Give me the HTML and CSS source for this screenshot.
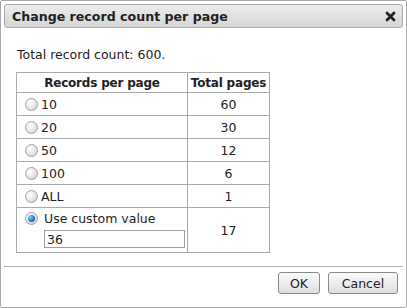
FILE: index.html
```html
<!DOCTYPE html>
<html>
<head>
<meta charset="utf-8">
<link rel="stylesheet" href="styles.css">
</head>
<body>
<div class="dialog">
  <div class="titlebar">
    <span class="title">Change record count per page</span>
    <svg class="close" width="11" height="11" viewBox="0 0 11 11"><path d="M2 2 L9 9 M9 2 L2 9" stroke="#222" stroke-width="2.8" stroke-linecap="round"/></svg>
  </div>
  <div class="content">
    <p class="total">Total record count: 600.</p>
    <table class="grid">
      <thead>
        <tr><th class="c1">Records per page</th><th class="c2">Total pages</th></tr>
      </thead>
      <tbody>
        <tr><td><span class="radio"></span>10</td><td class="num">60</td></tr>
        <tr><td><span class="radio"></span>20</td><td class="num">30</td></tr>
        <tr><td><span class="radio"></span>50</td><td class="num">12</td></tr>
        <tr><td><span class="radio"></span>100</td><td class="num">6</td></tr>
        <tr><td><span class="radio"></span>ALL</td><td class="num">1</td></tr>
        <tr class="custom"><td><div class="customline"><span class="radio checked"></span><span class="customlabel">Use custom value</span></div><input class="field" type="text" value="36"></td><td class="num">17</td></tr>
      </tbody>
    </table>
  </div>
  <div class="footer">
    <button class="btn ok">OK</button>
    <button class="btn cancel">Cancel</button>
  </div>
</div>
</body>
</html>
```
FILE: styles.css
```css
* { box-sizing: border-box; }
html, body { margin: 0; padding: 0; background: #fff; }
body {
  font-family: "DejaVu Sans", Verdana, sans-serif;
  font-size: 12.5px;
  color: #222;
}
.dialog {
  width: 407px;
  height: 308px;
  border: 1px solid #a8a8a8;
  border-radius: 2px;
  padding: 3px;
  display: flex;
  flex-direction: column;
}
.titlebar {
  height: 24px;
  flex: none;
  border: 1px solid #aaa;
  border-radius: 3px;
  background: linear-gradient(#ececec, #d6d6d6);
  display: flex;
  align-items: center;
  justify-content: space-between;
  padding: 0 6px 0 7px;
}
.title {
  font-weight: bold;
  font-size: 12.6px;
  color: #222;
}
.close { display: block; }
.content {
  padding: 0 0 0 12px;
  flex: 1;
}
.total {
  margin: 19px 0 9px 1px;
  line-height: 16px;
}
.grid {
  border-collapse: collapse;
  table-layout: fixed;
  width: 253px;
}
.grid th, .grid td {
  border: 1px solid #aaa;
  padding: 0;
}
.grid th {
  font-weight: bold;
  font-size: 12px;
  white-space: nowrap;
  height: 20px;
  line-height: 16px;
  letter-spacing: -0.2px;
}
.grid th.c1 { width: 171px; }
.grid th.c2 { width: 82px; }
.grid td {
  height: 23px;
  padding-left: 8px;
  vertical-align: middle;
  white-space: nowrap;
}
.grid td.num { text-align: center; padding-left: 0; }
.radio {
  display: inline-block;
  width: 13px;
  height: 13px;
  border-radius: 50%;
  border: 1px solid #a4a4a4;
  background: radial-gradient(circle at 35% 35%, #fff 0, #eaeaea 45%, #c8c8c8 100%);
  vertical-align: -2px;
  margin-right: 3px;
  position: relative;
}
.radio.checked::after {
  content: "";
  position: absolute;
  left: 2px;
  top: 2px;
  width: 7px;
  height: 7px;
  border-radius: 50%;
  background: radial-gradient(circle at 35% 35%, #7fd3ff 0, #1a7fc4 55%, #0a3f70 100%);
}
.grid tr.custom td { height: 45px; }
.customline { display: flex; align-items: center; margin-top: 1px; }
.customline .radio { margin-right: 0; }
.customlabel { margin-left: 6px; }
.field {
  display: block;
  margin: 4px 0 2px 19px;
  width: 141px;
  height: 18px;
  border: 1px solid #a0a0a0;
  font-family: "DejaVu Sans", Verdana, sans-serif;
  font-size: 12.5px;
  color: #222;
  padding: 0 2px;
}
.footer {
  flex: none;
  border-top: 1px solid #b0b0b0;
  height: 38px;
  display: flex;
  justify-content: flex-end;
  align-items: flex-start;
  gap: 8px;
  padding: 5px 5px 0 0;
}
.btn {
  font-family: "DejaVu Sans", Verdana, sans-serif;
  font-size: 12.5px;
  color: #222;
  height: 22px;
  border: 1px solid #8a8a8a;
  border-radius: 3px;
  background: linear-gradient(#fbfbfb, #dedede);
  padding: 0;
}
.ok { width: 42px; }
.cancel { width: 70px; }
```
